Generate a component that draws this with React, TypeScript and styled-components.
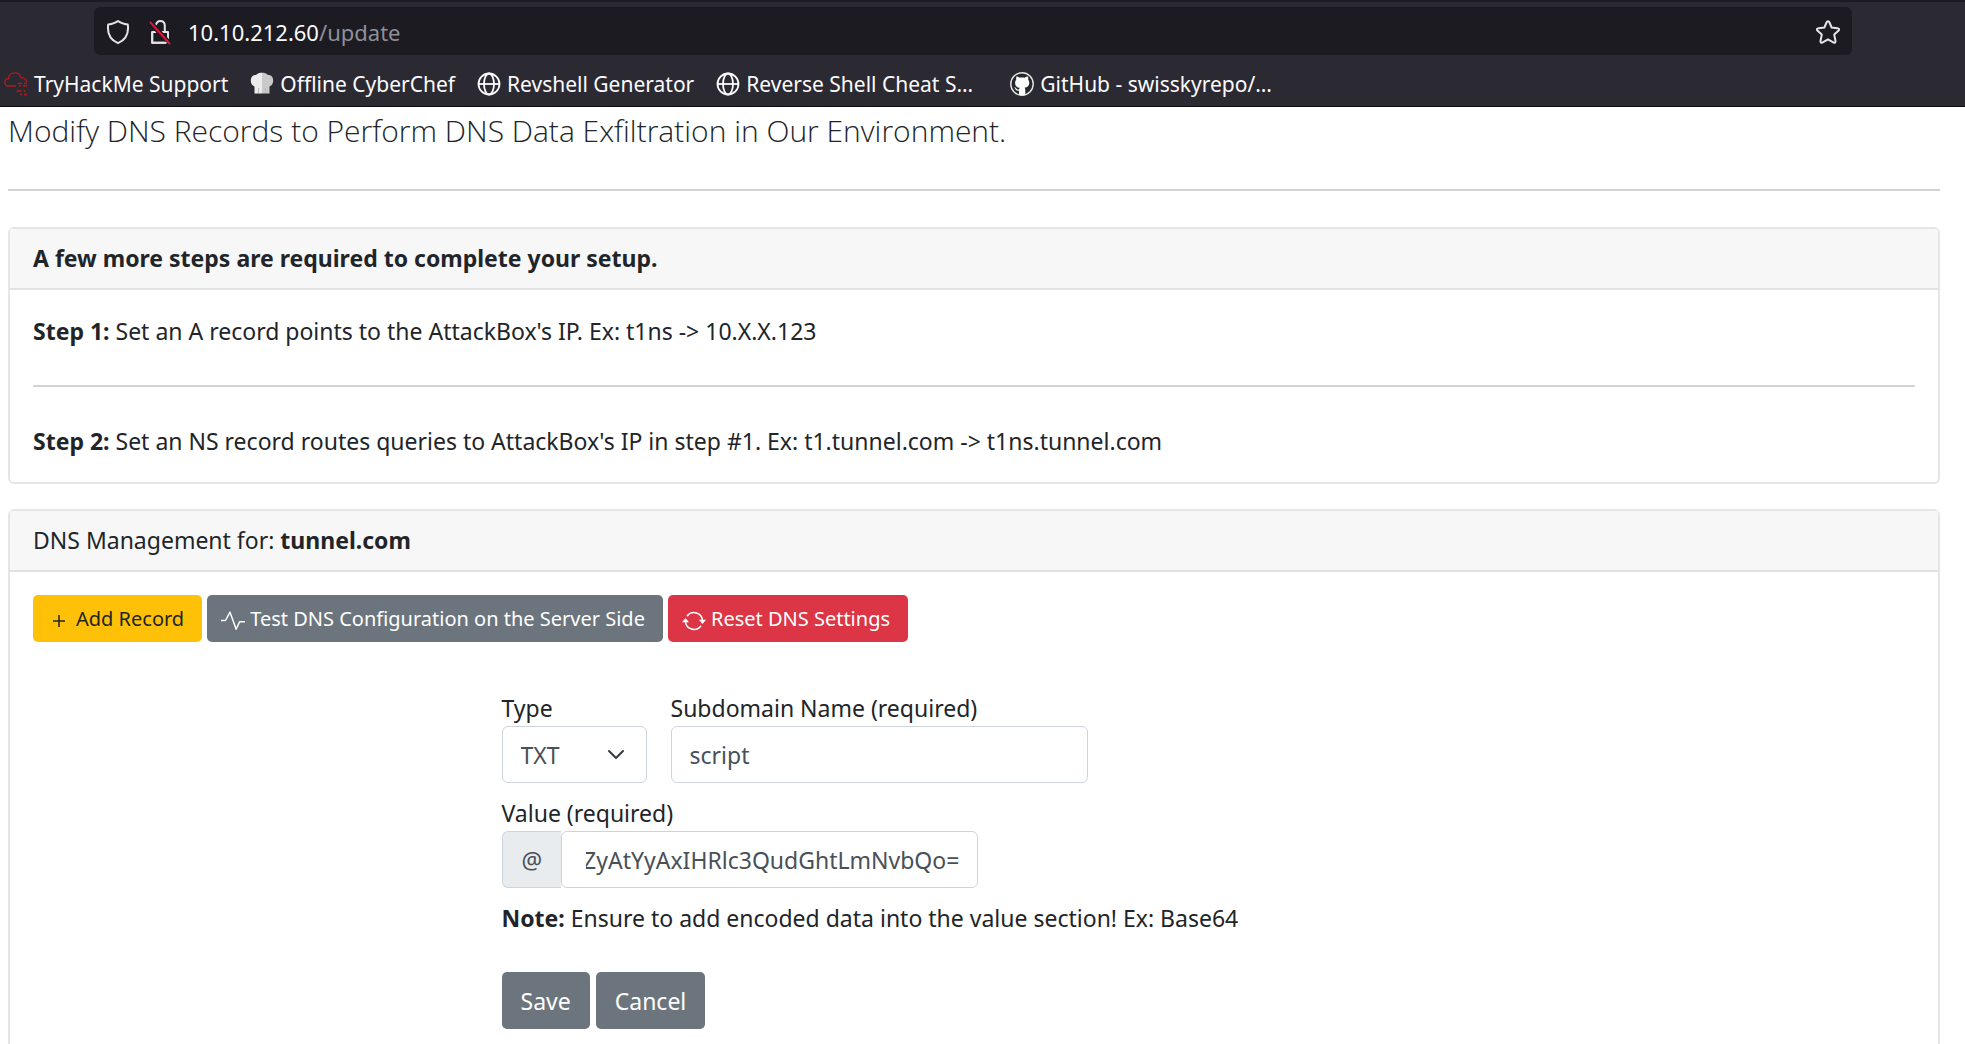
import React, { useLayoutEffect, useRef } from 'react';
import styled, { createGlobalStyle } from 'styled-components';

const uiFont = '"Noto Sans", "Open Sans", sans-serif';

const GlobalStyle = createGlobalStyle`
  *, *::before, *::after { box-sizing: border-box; }
  body {
    margin: 0;
    background: #fff;
    color: #212529;
    font-family: ${uiFont};
    font-size: 23px;
    line-height: 36px;
  }
`;

const Shell = styled.div`
  display: flex;
  flex-direction: column;
  height: 100vh;
  overflow: hidden;
`;

/* ---------- browser chrome ---------- */

const Chrome = styled.header`
  flex: none;
  background: #2b2a33;
  border-top: 2px solid #1c1b22;
  border-bottom: 1px solid #0c0c0d;
  color: #fbfbfe;
`;

const AddressRow = styled.div`
  padding: 5px 113px 0 94px;
`;

const AddressBar = styled.div`
  display: flex;
  align-items: center;
  height: 48px;
  padding: 1px 11px 0 12px;
  border-radius: 6px;
  background: #1c1b22;
`;

const IconButton = styled.button`
  display: flex;
  flex: none;
  padding: 0;
  border: 0;
  background: none;
  color: #e4e4e8;
  cursor: pointer;
`;

const Security = styled.div`
  display: flex;
  gap: 19px;
  margin-right: 17px;
`;

const Url = styled.div`
  flex: 1;
  font-size: 22px;
  line-height: 30px;
  outline: none;
`;

const UrlPath = styled.span`
  color: #8f8f98;
`;

const Bookmarks = styled.nav`
  display: flex;
  align-items: center;
  gap: 22px;
  height: 51px;
  padding: 7px 4px 0;
`;

const BookmarkLink = styled.a`
  display: flex;
  align-items: center;
  gap: 6px;
  color: inherit;
  font-size: 21px;
  line-height: 30px;
  text-decoration: none;
  white-space: nowrap;
`;

const BookmarkLabel = styled.span<{ $wide?: boolean }>`
  min-width: ${(p) => (p.$wide ? '242px' : '0')};
`;

/* ---------- page ---------- */

const Page = styled.main`
  flex: 1;
  min-height: 0;
  overflow: hidden;
  padding: 6px 25px 0 8px;
`;

const Lead = styled.p`
  margin: 0;
  font-family: "Open Sans", "Noto Sans", sans-serif;
  font-size: 30px;
  font-weight: 300;
`;

const Rule = styled.hr<{ $far?: boolean }>`
  height: 2px;
  margin: ${(p) => (p.$far ? '40px' : '36px')} 0 36px;
  border: 0;
  background: #d3d3d3;
`;

const Card = styled.section`
  margin-bottom: 25px;
  border: 2px solid #e6e6e6;
  border-radius: 6px;
`;

const CardHeader = styled.header`
  padding: 11px 23px 12px;
  border-bottom: 2px solid #e2e2e2;
  background: #f7f7f7;
`;

const CardBody = styled.div`
  padding: 23px;
`;

const Step = styled.p`
  margin: 0;
`;

const Toolbar = styled.div`
  display: flex;
  gap: 5px;
`;

const tones = {
  warning: { bg: '#ffc107', fg: '#212529' },
  secondary: { bg: '#6c757d', fg: '#fff' },
  danger: { bg: '#dc3545', fg: '#fff' },
};

const Button = styled.button<{ $tone: keyof typeof tones; $small?: boolean }>`
  display: flex;
  align-items: center;
  gap: 5px;
  height: ${(p) => (p.$small ? '47px' : '57px')};
  padding: ${(p) => (p.$small ? '0 18px 0 14px' : '0 19px')};
  border: 0;
  border-radius: 5px;
  background: ${(p) => tones[p.$tone].bg};
  color: ${(p) => tones[p.$tone].fg};
  font-family: inherit;
  font-size: ${(p) => (p.$small ? '20px' : '23px')};
  cursor: pointer;
  svg { margin-top: 4px; }
`;

const RecordForm = styled.form`
  display: flex;
  flex-direction: column;
  align-items: flex-start;
  gap: 12px;
  margin: 48px 0 24px calc(25% - 2px);
`;

const FieldRow = styled.div`
  display: flex;
  gap: 24px;
`;

const Field = styled.div`
  display: flex;
  flex-direction: column;
`;

const control = `
  height: 57px;
  padding: 0 18px;
  border: 1px solid #ced4da;
  border-radius: 6px;
  background: #fff;
  color: #495057;
  font-family: inherit;
  font-size: 23px;
`;

const SelectWrap = styled.div`
  position: relative;
  display: flex;
  svg {
    position: absolute;
    top: 22px;
    right: 22px;
    pointer-events: none;
  }
`;

const Select = styled.select`
  ${control}
  width: 145px;
  appearance: none;
`;

const TextInput = styled.input<{ $grouped?: boolean }>`
  ${control}
  width: 417px;
  padding-left: ${(p) => (p.$grouped ? '24px' : '18px')};
`;

const InputGroup = styled.div`
  display: flex;
`;

const Addon = styled.span`
  display: flex;
  align-items: center;
  height: 57px;
  padding: 0 19px;
  border: 1px solid #ced4da;
  border-right: 0;
  border-radius: 6px 0 0 6px;
  background: #e9ecef;
  color: #495057;
`;

const Actions = styled.div`
  display: flex;
  gap: 6px;
  margin-top: 24px;
`;

/* ---------- icons ---------- */

const ShieldIcon = () => (
  <svg width="24" height="26" viewBox="0 0 24 26" fill="none" stroke="currentColor" strokeWidth="2" strokeLinejoin="round">
    <path d="M12 2C9.500 4 6 5 2.200 5.600 1.200 13 3.500 20.500 12 24.200 20.500 20.500 22.800 13 21.800 5.600 18 5 14.500 4 12 2Z" />
  </svg>
);

const LockOffIcon = () => (
  <svg width="22" height="26" viewBox="0 0 22 26" fill="none" strokeWidth="2" strokeLinecap="round" strokeLinejoin="round">
    <path stroke="currentColor" d="M3.200 13h15.800v10.800H3.200ZM6.500 6.500C7.500 3.500 9 2 11.200 2c2.800 0 4.600 2 4.600 4.800V13" />
    <path stroke="#1c1b22" strokeWidth="5" d="m2 4 18.500 20.500" />
    <path stroke="currentColor" d="M3.200 13.500v10.300h13.500" />
    <path stroke="#e2103e" d="m1.500 3.500 19 21" />
  </svg>
);

const StarIcon = () => (
  <svg width="26" height="26" viewBox="0 0 26 26" fill="none" stroke="currentColor" strokeWidth="2" strokeLinejoin="round">
    <path d="M13 2.200c.8 0 1.200.6 1.500 1.300l2.100 5 5.800.7c1.800.2 2.300 1.500 1 2.600l-4.200 3.800 1.300 6.400c.3 1.600-.8 2.200-2.200 1.400L13 20.400l-5.300 3c-1.400.8-2.500.2-2.200-1.400l1.300-6.400-4.200-3.800c-1.300-1.100-.8-2.400 1-2.600l5.800-.7 2.100-5c.3-.7.700-1.300 1.500-1.300Z" />
  </svg>
);

const CloudIcon = () => (
  <svg width="24" height="24" viewBox="0 0 24 24" fill="none" stroke="#b01a1e" strokeWidth="1.400">
    <path d="M12 14H5C2.300 14 .8 12.300.8 10.300.8 8 2.400 6.600 4.500 6.600 4.800 3 7.600.9 10.900.9c3 0 5.300 1.900 5.900 4.700 3.200-.2 5.800 1.700 6 4.700" />
    <path strokeWidth="1.500" d="M14 11.500h4M20 11.500h3M15 14h2M19 14h4M12.500 19h5M19.500 19h2M16 22.500h2M20 22.500h3" />
  </svg>
);

const ChefHatIcon = () => (
  <svg width="24" height="24" viewBox="0 0 24 24">
    <path fill="#ececec" d="M4.500 21.500V14.500C2 13.500.8 11.500.8 8.600.8 4.800 3.200 2.600 6 3 7.500 1.300 9.500.8 12 .8v20.700Z" />
    <path fill="#c9c9c9" d="M19.500 21.500V14.500c2.500-1 3.700-3 3.700-5.900 0-3.800-2.400-6-5.200-5.600C16.500 1.300 14.500.8 12 .8v20.700Z" />
    <path stroke="#b9b9b9" strokeWidth="1" d="M8.500 16v5M15.500 16v5" />
  </svg>
);

const GlobeIcon = () => (
  <svg width="24" height="24" viewBox="0 0 24 24" fill="none" stroke="#fbfbfe" strokeWidth="1.800">
    <circle cx="12" cy="12" r="10.500" />
    <ellipse cx="12" cy="12" rx="5" ry="10.500" />
    <path d="M1.500 12h21" />
  </svg>
);

const GitHubIcon = () => (
  <svg width="24" height="24" viewBox="0 0 24 24">
    <circle cx="12" cy="12" r="11.200" fill="#24292e" stroke="#e6e6e6" strokeWidth="1.400" />
    <path
      fill="#fff"
      d="M9 22.800v-4.100c-2.700.3-3.400-1.100-3.900-2.300-.2-.5-.7-.9-1-1.200 1.700-.3 2.200 1.500 3 2 .7.400 1.400.3 2 .1.100-.7.500-1.200.8-1.500-2.900-.4-4.800-1.700-4.800-5 0-1.300.4-2.400 1.200-3.200-.2-.7-.3-1.900.2-3 1.100-.1 2.300.6 3.100 1.200 1.600-.4 3.600-.4 5.200 0 .8-.6 2-1.300 3.100-1.200.5 1.100.4 2.300.2 3 .8.800 1.200 1.900 1.200 3.200 0 3.300-1.900 4.600-4.800 5 .4.400.8 1.100.8 2.100v4.900c-2.100.7-4.300.7-6.300 0Z"
    />
  </svg>
);

const PlusIcon = () => (
  <svg width="24" height="24" viewBox="0 0 24 24" fill="none" stroke="currentColor" strokeWidth="1.500">
    <path d="M12 6v12M6 12h12" />
  </svg>
);

const PulseIcon = () => (
  <svg width="24" height="24" viewBox="0 0 24 24" fill="none" stroke="currentColor" strokeWidth="1.500" strokeLinejoin="round">
    <path d="M0 11.500h4.500L9 3.200l6.200 17 3.400-7.400H24" />
  </svg>
);

const SyncIcon = () => (
  <svg width="24" height="24" viewBox="0 0 24 24" fill="none" stroke="currentColor" strokeWidth="1.500">
    <path d="M5 7.300A8.500 8.500 0 0 1 20.500 12M19 16.700A8.500 8.500 0 0 1 3.500 12" />
    <path fill="currentColor" stroke="none" d="M0 13.300 3.500 9 7 13.300ZM17 10.700h7L20.500 15Z" />
  </svg>
);

const ChevronIcon = () => (
  <svg width="18" height="14" viewBox="0 0 18 14" fill="none" stroke="#343a40" strokeWidth="2" strokeLinecap="round" strokeLinejoin="round">
    <path d="m2 3 7 7 7-7" />
  </svg>
);

const bookmarks = [
  { label: 'TryHackMe Support', icon: <CloudIcon /> },
  { label: 'Offline CyberChef', icon: <ChefHatIcon /> },
  { label: 'Revshell Generator', icon: <GlobeIcon /> },
  { label: 'Reverse Shell Cheat S…', icon: <GlobeIcon />, wide: true },
  { label: 'GitHub - swisskyrepo/…', icon: <GitHubIcon />, wide: true },
];

export default function App() {
  const valueRef = useRef<HTMLInputElement>(null);

  // Keep the end of a long encoded value in view.
  useLayoutEffect(() => {
    const input = valueRef.current;
    if (input) input.scrollLeft = input.scrollWidth;
  }, []);

  return (
    <Shell>
      <GlobalStyle />
      <Chrome>
        <AddressRow>
          <AddressBar>
            <Security>
              <IconButton aria-label="Tracking protection"><ShieldIcon /></IconButton>
              <IconButton aria-label="Connection not secure"><LockOffIcon /></IconButton>
            </Security>
            <Url role="textbox" aria-label="Address" contentEditable suppressContentEditableWarning spellCheck={false}>
              10.10.212.60<UrlPath>/update</UrlPath>
            </Url>
            <IconButton aria-label="Bookmark this page"><StarIcon /></IconButton>
          </AddressBar>
        </AddressRow>
        <Bookmarks aria-label="Bookmarks">
          {bookmarks.map((b) => (
            <BookmarkLink key={b.label} href="#">
              {b.icon}
              <BookmarkLabel $wide={b.wide}>{b.label}</BookmarkLabel>
            </BookmarkLink>
          ))}
        </Bookmarks>
      </Chrome>

      <Page>
        <Lead>Modify DNS Records to Perform DNS Data Exfiltration in Our Environment.</Lead>
        <Rule $far />

        <Card>
          <CardHeader><strong>A few more steps are required to complete your setup.</strong></CardHeader>
          <CardBody>
            <Step><strong>Step 1:</strong> Set an A record points to the AttackBox's IP. Ex: t1ns -&gt; 10.X.X.123</Step>
            <Rule />
            <Step><strong>Step 2:</strong> Set an NS record routes queries to AttackBox's IP in step #1. Ex: t1.tunnel.com -&gt; t1ns.tunnel.com</Step>
          </CardBody>
        </Card>

        <Card>
          <CardHeader>DNS Management for: <strong>tunnel.com</strong></CardHeader>
          <CardBody>
            <Toolbar>
              <Button type="button" $tone="warning" $small><PlusIcon />Add Record</Button>
              <Button type="button" $tone="secondary" $small><PulseIcon />Test DNS Configuration on the Server Side</Button>
              <Button type="button" $tone="danger" $small><SyncIcon />Reset DNS Settings</Button>
            </Toolbar>

            <RecordForm onSubmit={(e) => e.preventDefault()}>
              <FieldRow>
                <Field>
                  <label htmlFor="type">Type</label>
                  <SelectWrap>
                    <Select id="type" defaultValue="TXT">
                      <option>A</option>
                      <option>NS</option>
                      <option>TXT</option>
                    </Select>
                    <ChevronIcon />
                  </SelectWrap>
                </Field>
                <Field>
                  <label htmlFor="subdomain">Subdomain Name (required)</label>
                  <TextInput id="subdomain" defaultValue="script" />
                </Field>
              </FieldRow>
              <Field>
                <label htmlFor="value">Value (required)</label>
                <InputGroup>
                  <Addon>@</Addon>
                  <TextInput id="value" ref={valueRef} $grouped defaultValue="cGluZyAtYyAxIHRlc3QudGhtLmNvbQo=" />
                </InputGroup>
              </Field>
              <Step><strong>Note:</strong> Ensure to add encoded data into the value section! Ex: Base64</Step>
              <Actions>
                <Button type="submit" $tone="secondary">Save</Button>
                <Button type="button" $tone="secondary">Cancel</Button>
              </Actions>
            </RecordForm>
          </CardBody>
        </Card>
      </Page>
    </Shell>
  );
}
